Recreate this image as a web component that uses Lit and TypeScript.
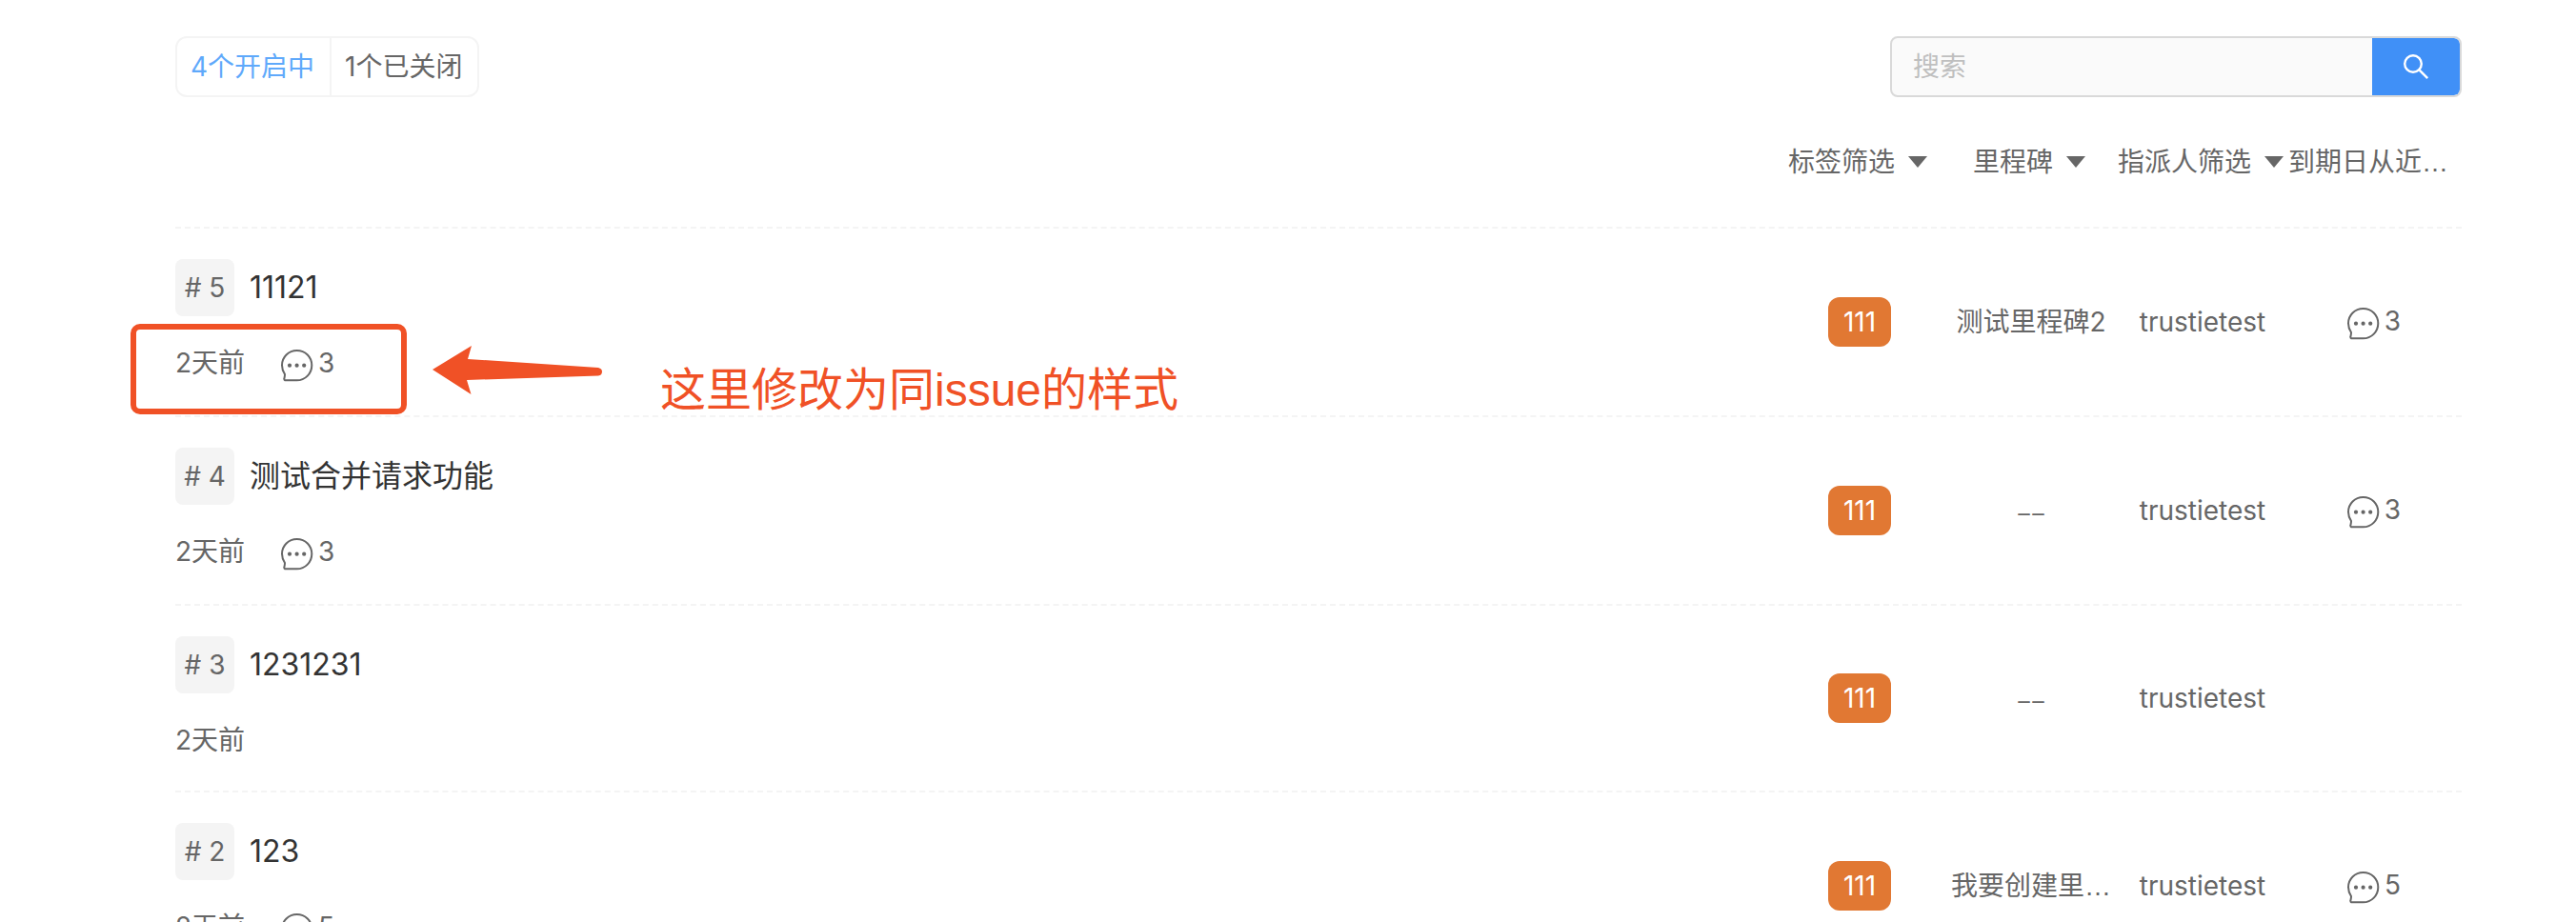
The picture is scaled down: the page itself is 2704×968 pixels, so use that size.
import { LitElement, html, css, nothing } from "lit";
import { customElement, property } from "lit/decorators.js";

interface Issue {
  id: number;
  title: string;
  time: string;
  tag: string;
  milestone?: string;
  clipped?: boolean;
  assignee: string;
  comments: number;
}

const ISSUES: Issue[] = [
  { id: 5, title: "11121", time: "2天前", tag: "111", milestone: "测试里程碑2", assignee: "trustietest", comments: 3 },
  { id: 4, title: "测试合并请求功能", time: "2天前", tag: "111", assignee: "trustietest", comments: 3 },
  { id: 3, title: "1231231", time: "2天前", tag: "111", assignee: "trustietest", comments: 0 },
  { id: 2, title: "123", time: "2天前", tag: "111", milestone: "我要创建里", clipped: true, assignee: "trustietest", comments: 5 },
];

@customElement("comment-count")
export class CommentCount extends LitElement {
  @property({ type: Number }) count = 0;

  static styles = css`
    :host {
      display: inline-flex;
      align-items: flex-start;
      gap: 5px;
      height: 44px;
      line-height: 42px;
      vertical-align: top;
    }
    .icon {
      width: 34px;
      height: 34px;
      margin-top: 7px;
      fill: none;
      stroke: currentColor;
      stroke-width: 2;
    }
    .dot {
      fill: currentColor;
      stroke: none;
    }
  `;

  render() {
    return html`
      <svg class="icon" viewBox="0 0 34 34" aria-hidden="true">
        <path
          d="M5 32.3H16.5C25.5 32.3 32.3 25 32.3 16.5C32.3 7.8 25.5 1 16.6 1C8 1 1 7.8 1 16.5C1 20 2.2 23.3 4 26C4 28 3.6 29 3.4 30.3C3.1 31.6 3.7 32.3 5 32.3Z"
        />
        <circle class="dot" cx="9" cy="16.7" r="2.1" />
        <circle class="dot" cx="16.6" cy="16.7" r="2.1" />
        <circle class="dot" cx="24.2" cy="16.7" r="2.1" />
      </svg>
      <span>${this.count}</span>
    `;
  }
}

@customElement("app-root")
export class AppRoot extends LitElement {
  static styles = css`
    :host {
      display: block;
      position: relative;
      box-sizing: border-box;
      height: 100vh;
      overflow: hidden;
      padding: 38px 120px 0 184px;
      background: #fff;
      color: #666;
      font: 28px/42px Inter, "Noto Sans CJK SC", sans-serif;
    }
    * {
      box-sizing: border-box;
    }
    button,
    input {
      font: inherit;
      color: inherit;
      border: 0;
      margin: 0;
      padding: 0;
      background: none;
    }
    a {
      color: inherit;
      text-decoration: none;
    }
    .toolbar {
      display: flex;
      justify-content: space-between;
    }
    .tabs {
      display: flex;
      height: 64px;
      border: 2px solid #f4f4f4;
      border-radius: 12px;
    }
    .tab {
      padding: 0 16px 0 14px;
    }
    .tab + .tab {
      border-left: 2px solid #f4f4f4;
    }
    .tab.active {
      color: #5fa9fb;
    }
    .search {
      display: flex;
      width: 600px;
      height: 64px;
      border: 2px solid #d9d9d9;
      border-radius: 8px;
      background: #fafafa;
      overflow: hidden;
    }
    .query {
      flex: 1;
      min-width: 0;
      padding: 0 22px;
    }
    .query::placeholder {
      color: #bfbfbf;
      opacity: 1;
    }
    .go {
      display: flex;
      align-items: center;
      justify-content: center;
      width: 92px;
      background: #4090f7;
      color: #fff;
      border-radius: 0 6px 6px 0;
    }
    .glass {
      width: 28px;
      height: 28px;
      fill: none;
      stroke: currentColor;
      stroke-width: 2.4;
    }
    .filters,
    .columns {
      display: grid;
      grid-template-columns: repeat(4, 180px);
      align-items: center;
      justify-content: end;
      padding-right: 2px;
      text-align: center;
      white-space: nowrap;
    }
    .filters {
      padding: 47px 2px 47px 0;
      border-bottom: 2px dashed #f4f4f4;
    }
    .filter {
      display: flex;
      align-items: center;
      justify-content: center;
      gap: 14px;
      padding-right: 4px;
    }
    .filter.sort {
      justify-content: flex-start;
    }
    .caret {
      border: solid transparent;
      border-width: 12px 10px 0;
      border-top-color: #666;
    }
    .dots {
      font-family: "Liberation Sans", sans-serif;
      line-height: 0;
    }
    .none {
      font-family: "Noto Sans CJK SC", sans-serif;
    }
    .list {
      list-style: none;
      margin: 0;
      padding: 0;
    }
    .row {
      display: flex;
      justify-content: space-between;
      align-items: center;
      padding: 32px 0;
      border-bottom: 2px dashed #f4f4f4;
    }
    .heading {
      display: flex;
      align-items: center;
      gap: 16px;
      margin-bottom: 28px;
    }
    .number {
      min-width: 62px;
      line-height: 60px;
      text-align: center;
      border-radius: 8px;
      background: #f4f4f4;
    }
    .title {
      margin: 0;
      font-size: 32px;
      font-weight: 400;
      color: #333;
    }
    .meta {
      display: flex;
      gap: 38px;
    }
    .tag {
      display: inline-block;
      padding: 0 10px;
      min-width: 66px;
      line-height: 52px;
      vertical-align: top;
      border-radius: 12px;
      background: #e17833;
      color: #fff;
    }
    .frame {
      position: absolute;
      left: 137px;
      top: 340px;
      width: 290px;
      height: 95px;
      border: 6px solid #f05126;
      border-radius: 10px;
    }
    .arrow {
      position: absolute;
      left: 453px;
      top: 362px;
      width: 180px;
      height: 52px;
      fill: #f05126;
    }
    .note {
      position: absolute;
      left: 693px;
      top: 374px;
      font: 48px/72px "Liberation Sans", "Noto Sans CJK SC", sans-serif;
      color: #f05126;
      white-space: nowrap;
    }
  `;

  private renderMilestone(issue: Issue) {
    if (!issue.milestone) return html`<div class="none">––</div>`;
    return html`<div>${issue.milestone}${issue.clipped ? html`<span class="dots">…</span>` : nothing}</div>`;
  }

  private renderIssue(issue: Issue) {
    const comments = issue.comments
      ? html`<comment-count .count=${issue.comments}></comment-count>`
      : nothing;
    return html`
      <li class="row">
        <div>
          <div class="heading">
            <span class="number"># ${issue.id}</span>
            <h2 class="title"><a href="#${issue.id}">${issue.title}</a></h2>
          </div>
          <div class="meta"><span>${issue.time}</span>${comments}</div>
        </div>
        <div class="columns">
          <div><span class="tag">${issue.tag}</span></div>
          ${this.renderMilestone(issue)}
          <div>${issue.assignee}</div>
          <div>${comments}</div>
        </div>
      </li>
    `;
  }

  render() {
    return html`
      <header class="toolbar">
        <div class="tabs">
          <button class="tab active">4个开启中</button>
          <button class="tab">1个已关闭</button>
        </div>
        <form class="search" @submit=${(e: Event) => e.preventDefault()}>
          <input class="query" type="text" placeholder="搜索" aria-label="搜索" />
          <button class="go" aria-label="搜索">
            <svg class="glass" viewBox="0 0 28 28" aria-hidden="true">
              <circle cx="11" cy="11" r="8.8" />
              <path d="M17.2 17.2L26.2 26.2" />
            </svg>
          </button>
        </form>
      </header>
      <div class="filters">
        <button class="filter">标签筛选<span class="caret"></span></button>
        <button class="filter">里程碑<span class="caret"></span></button>
        <button class="filter">指派人筛选<span class="caret"></span></button>
        <button class="filter sort"><span>到期日从近<span class="dots">…</span></span></button>
      </div>
      <ul class="list">
        ${ISSUES.map((issue) => this.renderIssue(issue))}
      </ul>
      <div class="frame"></div>
      <svg class="arrow" viewBox="0 0 180 52" aria-hidden="true">
        <path d="M1 26L42 1L38 15L175 24Q179 25 179 28Q179 32 175 32.5L37 37L41.500 52Z" />
      </svg>
      <div class="note">这里修改为同issue的样式</div>
    `;
  }
}
